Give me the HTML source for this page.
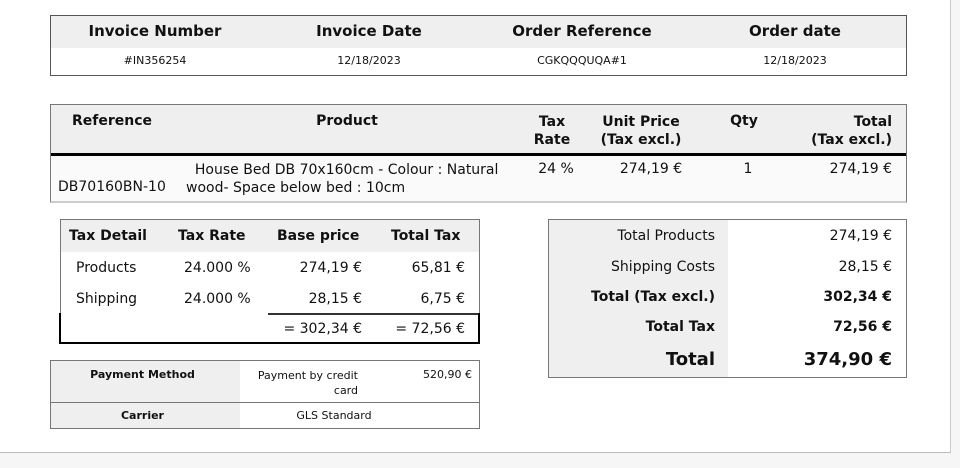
<!DOCTYPE html>
<html><head><meta charset="utf-8"><style>
*{margin:0;padding:0;box-sizing:border-box}
body{width:960px;height:468px;background:#f6f6f6;font-family:"DejaVu Sans","Liberation Sans",sans-serif;color:#111;position:relative;overflow:hidden}
.page{position:absolute;left:0;top:0;width:951px;height:453px;background:#fff;border-right:1px solid #ccc;border-bottom:1px solid #bbb}
.a{position:absolute}
.t{position:absolute;white-space:nowrap;margin-top:1px}
.b{font-weight:bold}
.c{text-align:center}
.r{text-align:right}
</style></head><body>
<div class="page"></div>

<!-- top table -->
<div class="a" style="left:50px;top:15px;width:857px;height:61px;border:1px solid #555;background:#fff"></div>
<div class="a" style="left:51px;top:16px;width:855px;height:32px;background:#efefef"></div>
<div class="t b c" style="left:51px;top:21px;width:208px;font-size:15px">Invoice Number</div>
<div class="t b c" style="left:265px;top:21px;width:208px;font-size:15px">Invoice Date</div>
<div class="t b c" style="left:475px;top:21px;width:214px;font-size:15px">Order Reference</div>
<div class="t b c" style="left:688px;top:21px;width:214px;font-size:15px">Order date</div>
<div class="t c" style="left:51px;top:53px;width:208px;font-size:11px">#IN356254</div>
<div class="t c" style="left:265px;top:53px;width:208px;font-size:11px">12/18/2023</div>
<div class="t c" style="left:475px;top:53px;width:214px;font-size:11px">CGKQQQUQA#1</div>
<div class="t c" style="left:688px;top:53px;width:214px;font-size:11px">12/18/2023</div>

<!-- product table -->
<div class="a" style="left:50px;top:104px;width:857px;height:99px;border:1px solid #777;border-bottom:2px solid #ccc;background:#fafafa"></div>
<div class="a" style="left:51px;top:105px;width:855px;height:48px;background:#efefef"></div>
<div class="a" style="left:51px;top:153px;width:855px;height:3px;background:#000"></div>
<div class="t b" style="left:72px;top:112px;font-size:14px">Reference</div>
<div class="t b c" style="left:280px;top:112px;width:134px;font-size:14px">Product</div>
<div class="t b c" style="left:525px;top:112px;width:54px;font-size:14px;line-height:18px">Tax<br>Rate</div>
<div class="t b c" style="left:588px;top:112px;width:106px;font-size:14px;line-height:18px">Unit Price<br>(Tax excl.)</div>
<div class="t b c" style="left:720px;top:112px;width:48px;font-size:14px">Qty</div>
<div class="t b r" style="left:780px;top:112px;width:112px;font-size:14px;line-height:18px">Total<br>(Tax excl.)</div>
<div class="t" style="left:58px;top:178px;font-size:14px">DB70160BN-10</div>
<div class="t" style="left:186px;top:160px;font-size:14px;line-height:18px;text-align:right">&nbsp;&nbsp;House Bed DB 70x160cm - Colour : Natural<br><span style="display:block;text-align:left">wood- Space below bed : 10cm</span></div>
<div class="t c" style="left:529px;top:160px;width:54px;font-size:14px">24 %</div>
<div class="t c" style="left:596px;top:160px;width:110px;font-size:14px">274,19 €</div>
<div class="t c" style="left:720px;top:160px;width:56px;font-size:14px">1</div>
<div class="t r" style="left:780px;top:160px;width:112px;font-size:14px">274,19 €</div>

<!-- tax detail -->
<div class="a" style="left:60px;top:219px;width:420px;height:95px;border:1px solid #777;border-bottom:none"></div>
<div class="a" style="left:61px;top:220px;width:418px;height:32px;background:#efefef"></div>
<div class="a" style="left:268px;top:313px;width:212px;height:2px;background:#333"></div>
<div class="a" style="left:59px;top:313px;width:421px;height:31px;border:2px solid #000;border-top:none"></div>
<div class="a" style="left:478px;top:313px;width:2px;height:31px;background:#000"></div>
<div class="t b" style="left:69px;top:227px;font-size:14px">Tax Detail</div>
<div class="t b" style="left:178px;top:227px;font-size:14px">Tax Rate</div>
<div class="t b" style="left:277px;top:227px;font-size:14px">Base price</div>
<div class="t b" style="left:391px;top:227px;font-size:14px">Total Tax</div>
<div class="t" style="left:76px;top:259px;font-size:14px">Products</div>
<div class="t" style="left:184px;top:259px;font-size:14px">24.000 %</div>
<div class="t r" style="left:262px;top:259px;width:100px;font-size:14px">274,19 €</div>
<div class="t r" style="left:366px;top:259px;width:99px;font-size:14px">65,81 €</div>
<div class="t" style="left:76px;top:290px;font-size:14px">Shipping</div>
<div class="t" style="left:184px;top:290px;font-size:14px">24.000 %</div>
<div class="t r" style="left:262px;top:290px;width:100px;font-size:14px">28,15 €</div>
<div class="t r" style="left:366px;top:290px;width:99px;font-size:14px">6,75 €</div>
<div class="t r" style="left:262px;top:320px;width:100px;font-size:14px">= 302,34 €</div>
<div class="t r" style="left:366px;top:320px;width:99px;font-size:14px">= 72,56 €</div>

<!-- payment -->
<div class="a" style="left:50px;top:360px;width:430px;height:69px;border:1px solid #777"></div>
<div class="a" style="left:51px;top:361px;width:189px;height:67px;background:#efefef"></div>
<div class="a" style="left:51px;top:402px;width:428px;height:1px;background:#777"></div>
<div class="t b c" style="left:51px;top:367px;width:183px;font-size:11px">Payment Method</div>
<div class="t r" style="left:240px;top:367px;width:118px;font-size:11px;line-height:15px">Payment by credit<br>card</div>
<div class="t r" style="left:380px;top:367px;width:92px;font-size:11px">520,90 €</div>
<div class="t b c" style="left:51px;top:408px;width:183px;font-size:11px">Carrier</div>
<div class="t c" style="left:240px;top:408px;width:188px;font-size:11px">GLS Standard</div>

<!-- totals -->
<div class="a" style="left:548px;top:219px;width:359px;height:159px;border:1px solid #777"></div>
<div class="a" style="left:549px;top:220px;width:179px;height:157px;background:#efefef"></div>
<div class="t r" style="left:549px;top:227px;width:166px;font-size:14px">Total Products</div>
<div class="t r" style="left:730px;top:227px;width:162px;font-size:14px">274,19 €</div>
<div class="t r" style="left:549px;top:258px;width:166px;font-size:14px">Shipping Costs</div>
<div class="t r" style="left:730px;top:258px;width:162px;font-size:14px">28,15 €</div>
<div class="t b r" style="left:549px;top:288px;width:166px;font-size:14px">Total (Tax excl.)</div>
<div class="t b r" style="left:730px;top:288px;width:162px;font-size:14px">302,34 €</div>
<div class="t b r" style="left:549px;top:318px;width:166px;font-size:14px">Total Tax</div>
<div class="t b r" style="left:730px;top:318px;width:162px;font-size:14px">72,56 €</div>
<div class="t b r" style="left:549px;top:348px;width:166px;font-size:18px">Total</div>
<div class="t b r" style="left:730px;top:348px;width:162px;font-size:18px">374,90 €</div>
</body></html>
